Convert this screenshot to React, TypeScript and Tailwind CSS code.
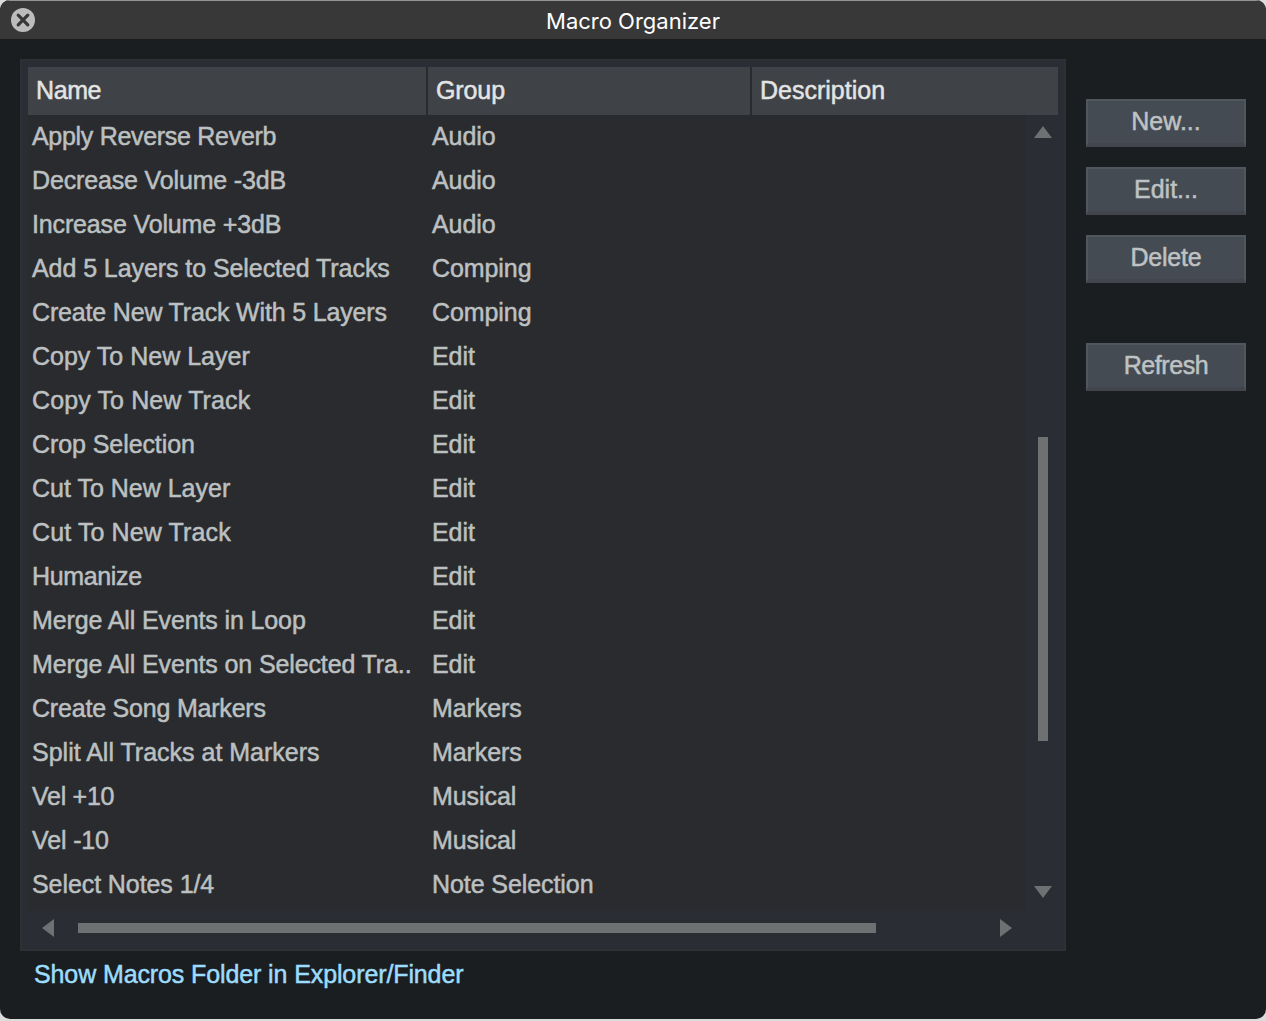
import React from "react";

type Macro = { name: string; group: string; tracking?: string };

const macros: Macro[] = [
  { name: "Apply Reverse Reverb", group: "Audio", tracking: "tracking-[-0.3px]" },
  { name: "Decrease Volume -3dB", group: "Audio", tracking: "tracking-[-0.15px]" },
  { name: "Increase Volume +3dB", group: "Audio", tracking: "tracking-[-0.15px]" },
  { name: "Add 5 Layers to Selected Tracks", group: "Comping", tracking: "tracking-[-0.07px]" },
  { name: "Create New Track With 5 Layers", group: "Comping", tracking: "tracking-[-0.17px]" },
  { name: "Copy To New Layer", group: "Edit" },
  { name: "Copy To New Track", group: "Edit", tracking: "tracking-[0.12px]" },
  { name: "Crop Selection", group: "Edit", tracking: "tracking-[-0.08px]" },
  { name: "Cut To New Layer", group: "Edit" },
  { name: "Cut To New Track", group: "Edit", tracking: "tracking-[0.12px]" },
  { name: "Humanize", group: "Edit", tracking: "tracking-[-0.35px]" },
  { name: "Merge All Events in Loop", group: "Edit", tracking: "tracking-[-0.12px]" },
  { name: "Merge All Events on Selected Tra..", group: "Edit", tracking: "tracking-[-0.12px]" },
  { name: "Create Song Markers", group: "Markers", tracking: "tracking-[-0.2px]" },
  { name: "Split All Tracks at Markers", group: "Markers" },
  { name: "Vel +10", group: "Musical", tracking: "tracking-[-0.28px]" },
  { name: "Vel -10", group: "Musical", tracking: "tracking-[-0.14px]" },
  { name: "Select Notes 1/4", group: "Note Selection", tracking: "tracking-[-0.08px]" },
];

function Arrow({ points, w, h }: { points: string; w: number; h: number }) {
  return (
    <svg width={w} height={h} viewBox={`0 0 ${w} ${h}`} className="block shrink-0" fill="#6f7072">
      <polygon points={points} />
    </svg>
  );
}

function PushButton({ label, className = "" }: { label: string; className?: string }) {
  return (
    <button
      className={`block h-12 w-40 border-2 border-b-4 border-[#50565e] border-b-[#42454d] bg-[#444b53] text-center text-[#bfc2c3] ${className}`}
    >
      <span className="block h-[42px] leading-[40px]">{label}</span>
    </button>
  );
}

export default function App() {
  return (
    <div className="h-[1021px] w-[1266px] overflow-hidden bg-[#dcdcdc] font-['Liberation_Sans',Arial,sans-serif] text-[25px] [-webkit-text-stroke:0.5px_currentColor]">
      <div className="flex h-[1019px] flex-col overflow-hidden rounded-[10px] bg-[#1a1e20]">
        <header className="grid h-[39px] shrink-0 grid-cols-[46px_1fr_46px] items-center border-t border-[#949494] bg-[#383838]">
          <svg width="24" height="24" viewBox="0 0 24 24" className="ml-[11px]">
            <circle cx="12" cy="12" r="12" fill="#bcbcbc" />
            <path d="M7.2 7.2l9.6 9.6M16.8 7.2l-9.6 9.6" stroke="#383838" strokeWidth="3.2" strokeLinecap="round" />
          </svg>
          <h1 className="mt-[2px] text-center font-[Inter,sans-serif] text-[22px] leading-[36px] text-white [-webkit-text-stroke:0px]">
            Macro Organizer
          </h1>
        </header>

        <div className="flex pt-5 pl-5">
          <main>
            <section className="h-[892px] w-[1046px] border-2 border-[#2f3036] bg-[#2b2d35] p-1.5">
              <div className="flex h-12 gap-[2px] bg-[#292b2e] leading-[47px] text-[#e3e4e4]">
                <div className="w-[398px] bg-[#3f4246] pl-2 tracking-[-0.4px]">Name</div>
                <div className="w-[322px] bg-[#3f4246] pl-2 tracking-[-0.1px]">Group</div>
                <div className="flex-1 bg-[#3f4246] pl-2">Description</div>
              </div>
              <div className="flex h-[796px]">
                <ul className="w-[998px] bg-[#2a2b2e] leading-[43px] text-[#bcc0c1]">
                  {macros.map((m) => (
                    <li key={m.name} className="flex h-11 pl-1">
                      <span className={`w-[400px] whitespace-nowrap ${m.tracking ?? ""}`}>{m.name}</span>
                      <span className="whitespace-nowrap tracking-[-0.08px]">{m.group}</span>
                    </li>
                  ))}
                </ul>
                <div className="flex flex-1 flex-col items-center pt-[11px] pl-[2px]">
                  <Arrow w={18} h={12} points="9,0 18,12 0,12" />
                  <div className="mt-[299px] mb-[145px] h-[304px] w-[10px] bg-[#6f7072]" />
                  <Arrow w={18} h={12} points="0,0 18,0 9,12" />
                </div>
              </div>
              <div className="flex h-[34px] items-center pl-[14px]">
                <Arrow w={12} h={18} points="12,0 12,18 0,9" />
                <div className="mr-[124px] ml-6 h-[10px] w-[798px] bg-[#6f7072]" />
                <Arrow w={12} h={18} points="0,0 12,9 0,18" />
              </div>
            </section>
            <a className="ml-[14px] block leading-[46px] tracking-[-0.11px] text-[#9cdcfd]">
              Show Macros Folder in Explorer/Finder
            </a>
          </main>
          <aside className="ml-5 flex flex-col gap-5 pt-10">
            <PushButton label="New..." />
            <PushButton label="Edit..." />
            <PushButton label="Delete" className="tracking-[-0.2px]" />
            <PushButton label="Refresh" className="mt-10 tracking-[-0.4px]" />
          </aside>
        </div>
      </div>
    </div>
  );
}
